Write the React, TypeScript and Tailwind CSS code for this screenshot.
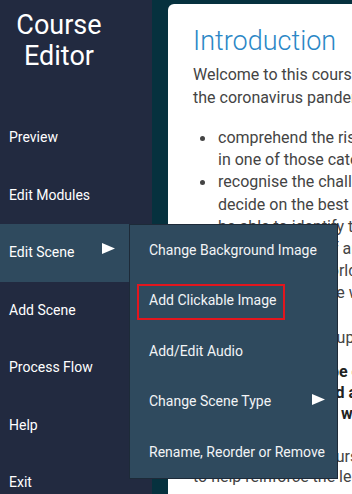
import React from 'react';

const navItems = ['Preview', 'Edit Modules', 'Edit Scene', 'Add Scene', 'Process Flow', 'Help', 'Exit'];

const subItems = [
  'Change Background Image',
  'Add Clickable Image',
  'Add/Edit Audio',
  'Change Scene Type',
  'Rename, Reorder or Remove',
];

const Arrow: React.FC<{ className?: string }> = ({ className = '' }) => (
  <svg className={className} width="13" height="11" viewBox="0 0 13 11">
    <polygon points="0,0 13,5.5 0,11" fill="#ffffff" />
  </svg>
);

const bullets: string[][] = [
  ['comprehend the risks for people who fall', 'in one of those categories'],
  ['recognise the challenges you may face and', 'decide on the best way to handle them'],
  ['be able to identify the signs of the virus', 'the symptoms of any cases early', 'friends, in the world around you'],
  ['stay safe at home when working'],
];

export default function App() {
  return (
    <div className="relative flex h-[494px] w-[352px] overflow-hidden bg-[#06313e] font-['Roboto',sans-serif]">
      {/* sidebar */}
      <aside className="flex w-[152px] shrink-0 flex-col bg-[#222a40] text-white">
        <div className="h-[109px] w-[118px] shrink-0 pt-[10px] text-center text-[27px] leading-[31px]">
          Course
          <br />
          Editor
        </div>
        {navItems.map((item) => (
          <div
            key={item}
            className={`relative flex h-[57.5px] shrink-0 items-center pl-[9px] text-[14px] ${
              item === 'Edit Scene' ? 'bg-[#2f4a5e]' : ''
            }`}
          >
            {item}
            {item === 'Edit Scene' && <Arrow className="absolute left-[102px] top-[19px]" />}
          </div>
        ))}
      </aside>

      {/* page content */}
      <main className="flex-1 pl-[16px] pt-[4px]">
        <div className="h-full w-[420px] rounded-tl-[6px] bg-white pl-[25px] pt-[21px] text-[16px] text-[#444444]">
          <h1 className="text-[27px] font-light leading-[32px] text-[#2b87c6]">Introduction</h1>
          <p className="mt-[5.5px] whitespace-nowrap leading-[23px]">
            Welcome to this course on working safely during
            <br />
            the coronavirus pandemic. By the end you will:
          </p>
          <ul className="mt-[18.5px] whitespace-nowrap leading-[22.2px]">
            {bullets.map((lines, i) => (
              <li key={i} className="relative pl-[25px]">
                <span className="absolute left-[7px] top-[9px] h-[5px] w-[5px] rounded-full bg-[#444444]" />
                {lines.map((l, j) => (
                  <div key={j}>{l}</div>
                ))}
              </li>
            ))}
          </ul>
          <p className="mt-[22px] whitespace-nowrap leading-[22px]">The course is made up of short modules</p>
          <p className="mt-[12.5px] whitespace-nowrap font-bold leading-[21px] text-[#222222]">
            Each module must be completed in order,
            <br />
            with each scene read and answered
            <br />
            before the next step will open
          </p>
          <p className="mt-[22.5px] whitespace-nowrap leading-[20px]">
            At the end of this course there is a short quiz
            <br />
            to help reinforce the learning.
          </p>
        </div>
      </main>

      {/* submenu */}
      <div className="absolute left-[129px] top-[224px] w-[209px] border border-[#1d2a38] bg-[#2f4a5e] text-[14px] text-[#f2f4f6]">
        {subItems.map((item) => (
          <div key={item} className="relative flex h-[50.5px] items-center pl-[19px]">
            {item}
            {item === 'Change Scene Type' && <Arrow className="absolute left-[182px] top-[17px]" />}
          </div>
        ))}
        <div className="absolute left-[7px] top-[59px] h-[36px] w-[148px] border-2 border-[#e3161e]" />
      </div>
    </div>
  );
}
